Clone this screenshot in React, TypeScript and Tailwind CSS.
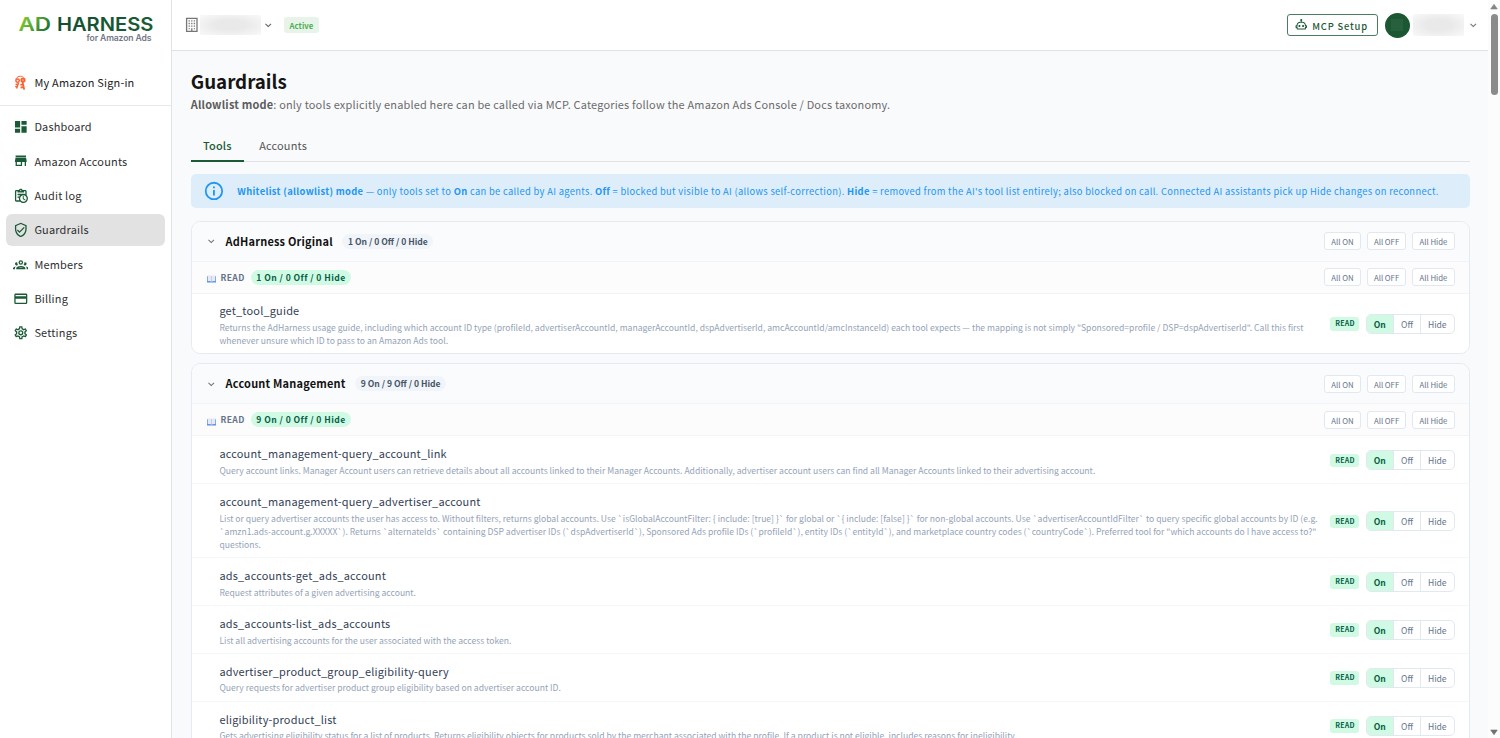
import type { ReactNode } from "react";

const ICONS = {
  dashboard: "M13,3V9H21V3M13,21H21V11H13M3,21H11V15H3M3,13H11V3H3V13Z",
  store: "M12,18H6V14H12M21,14V12L20,7H4L3,12V14H4V20H14V14H18V20H20V14M20,4H4V6H20V4Z",
  audit: "M21 11.11V5C21 3.9 20.11 3 19 3H14.82C14.4 1.84 13.3 1 12 1S9.6 1.84 9.18 3H5C3.9 3 3 3.9 3 5V19C3 20.11 3.9 21 5 21H11.11C12.37 22.24 14.09 23 16 23C19.87 23 23 19.87 23 16C23 14.09 22.24 12.37 21 11.11M12 3C12.55 3 13 3.45 13 4S12.55 5 12 5 11 4.55 11 4 11.45 3 12 3M5 19V5H7V7H17V5H19V9.68C18.09 9.25 17.08 9 16 9H7V11H11.1C10.5 11.57 10.04 12.25 9.68 13H7V15H9.08C9.03 15.33 9 15.66 9 16C9 17.08 9.25 18.09 9.68 19H5M16 21C13.24 21 11 18.76 11 16S13.24 11 16 11 21 13.24 21 16 18.76 21 16 21M16.5 16.25L19.36 17.94L18.61 19.16L15 17V12H16.5V16.25Z",
  shield: "M21,11C21,16.55 17.16,21.74 12,23C6.84,21.74 3,16.55 3,11V5L12,1L21,5V11M12,21C15.75,20 19,15.54 19,11.22V6.3L12,3.18L5,6.3V11.22C5,15.54 8.25,20 12,21M10,17L6,13L7.41,11.59L10,14.17L16.59,7.58L18,9",
  members: "M12,5A3.5,3.5 0 0,0 8.5,8.5A3.5,3.5 0 0,0 12,12A3.5,3.5 0 0,0 15.5,8.5A3.5,3.5 0 0,0 12,5M12,7A1.5,1.5 0 0,1 13.5,8.5A1.5,1.5 0 0,1 12,10A1.5,1.5 0 0,1 10.5,8.5A1.5,1.5 0 0,1 12,7M5.5,8A2.5,2.5 0 0,0 3,10.5C3,11.44 3.53,12.25 4.29,12.68C4.65,12.88 5.06,13 5.5,13C5.94,13 6.35,12.88 6.71,12.68C7.08,12.47 7.39,12.17 7.62,11.81C6.89,10.86 6.5,9.7 6.5,8.5C6.5,8.41 6.5,8.31 6.5,8.22C6.2,8.08 5.86,8 5.5,8M18.5,8C18.14,8 17.8,8.08 17.5,8.22C17.5,8.31 17.5,8.41 17.5,8.5C17.5,9.7 17.11,10.86 16.38,11.81C16.5,12 16.63,12.15 16.78,12.3C16.94,12.45 17.1,12.58 17.29,12.68C17.65,12.88 18.06,13 18.5,13C18.94,13 19.35,12.88 19.71,12.68C20.47,12.25 21,11.44 21,10.5A2.5,2.5 0 0,0 18.5,8M12,14C9.66,14 5,15.17 5,17.5V19H19V17.5C19,15.17 14.34,14 12,14M4.71,14.55C2.78,14.78 0,15.76 0,17.5V19H3V17.07C3,16.06 3.69,15.22 4.71,14.55M19.29,14.55C20.31,15.22 21,16.06 21,17.07V19H24V17.5C24,15.76 21.22,14.78 19.29,14.55M12,16C13.53,16 15.24,16.5 16.23,17H7.77C8.76,16.5 10.47,16 12,16Z",
  billing: "M20,8H4V6H20M20,18H4V12H20M20,4H4C2.89,4 2,4.89 2,6V18A2,2 0 0,0 4,20H20A2,2 0 0,0 22,18V6C22,4.89 21.1,4 20,4Z",
  cog: "M12,8A4,4 0 0,1 16,12A4,4 0 0,1 12,16A4,4 0 0,1 8,12A4,4 0 0,1 12,8M12,10A2,2 0 0,0 10,12A2,2 0 0,0 12,14A2,2 0 0,0 14,12A2,2 0 0,0 12,10M10,22C9.75,22 9.54,21.82 9.5,21.58L9.13,18.93C8.5,18.68 7.96,18.34 7.44,17.94L4.95,18.95C4.73,19.03 4.46,18.95 4.34,18.73L2.34,15.27C2.21,15.05 2.27,14.78 2.46,14.63L4.57,12.97L4.5,12L4.57,11L2.46,9.37C2.27,9.22 2.21,8.95 2.34,8.73L4.34,5.27C4.46,5.05 4.73,4.96 4.95,5.05L7.44,6.05C7.96,5.66 8.5,5.32 9.13,5.07L9.5,2.42C9.54,2.18 9.75,2 10,2H14C14.25,2 14.46,2.18 14.5,2.42L14.87,5.07C15.5,5.32 16.04,5.66 16.56,6.05L19.05,5.05C19.27,4.96 19.54,5.05 19.66,5.27L21.66,8.73C21.79,8.95 21.73,9.22 21.54,9.37L19.43,11L19.5,12L19.43,13L21.54,14.63C21.73,14.78 21.79,15.05 21.66,15.27L19.66,18.73C19.54,18.95 19.27,19.04 19.05,18.95L16.56,17.95C16.04,18.34 15.5,18.68 14.87,18.93L14.5,21.58C14.46,21.82 14.25,22 14,22H10M11.25,4L10.88,6.61C9.68,6.86 8.62,7.5 7.85,8.39L5.44,7.35L4.69,8.65L6.8,10.2C6.4,11.37 6.4,12.64 6.8,13.8L4.68,15.36L5.43,16.66L7.86,15.62C8.63,16.5 9.68,17.14 10.87,17.38L11.24,20H12.76L13.13,17.39C14.32,17.14 15.37,16.5 16.14,15.62L18.57,16.66L19.32,15.36L17.2,13.81C17.6,12.64 17.6,11.37 17.2,10.2L19.31,8.65L18.56,7.35L16.15,8.39C15.38,7.5 14.32,6.86 13.12,6.62L12.75,4H11.25Z",
  building: "M19 3V21H13V17.5H11V21H5V3H19M15 7H17V5H15V7M11 7H13V5H11V7M7 7H9V5H7V7M15 11H17V9H15V11M11 11H13V9H11V11M7 11H9V9H7V11M15 15H17V13H15V15M11 15H13V13H11V15M7 15H9V13H7V15M7 19H9V17.5H7V19M15 19H17V17.5H15V19M21 1H3V23H21V1Z",
  robot: "M17.5 15.5C17.5 16.61 16.61 17.5 15.5 17.5S13.5 16.61 13.5 15.5 14.4 13.5 15.5 13.5 17.5 14.4 17.5 15.5M8.5 13.5C7.4 13.5 6.5 14.4 6.5 15.5S7.4 17.5 8.5 17.5 10.5 16.61 10.5 15.5 9.61 13.5 8.5 13.5M23 15V18C23 18.55 22.55 19 22 19H21V20C21 21.11 20.11 22 19 22H5C3.9 22 3 21.11 3 20V19H2C1.45 19 1 18.55 1 18V15C1 14.45 1.45 14 2 14H3C3 10.13 6.13 7 10 7H11V5.73C10.4 5.39 10 4.74 10 4C10 2.9 10.9 2 12 2S14 2.9 14 4C14 4.74 13.6 5.39 13 5.73V7H14C17.87 7 21 10.13 21 14H22C22.55 14 23 14.45 23 15M21 16H19V14C19 11.24 16.76 9 14 9H10C7.24 9 5 11.24 5 14V16H3V17H5V20H19V17H21V16Z",
  info: "M11,9H13V7H11M12,20C7.59,20 4,16.41 4,12C4,7.59 7.59,4 12,4C16.41,4 20,7.59 20,12C20,16.41 16.41,20 12,20M12,2A10,10 0 0,0 2,12A10,10 0 0,0 12,22A10,10 0 0,0 22,12A10,10 0 0,0 12,2M11,17H13V11H11V17Z",
  chevron: "M7.41,8.58L12,13.17L16.59,8.58L18,10L12,16L6,10L7.41,8.58Z",
};

type IconName = keyof typeof ICONS;

type Tool = { name: string; description: string };
type Category = { title: string; summary: string; readSummary: string; tools: Tool[] };

const NAV: { label: string; icon: IconName }[] = [
  { label: "Dashboard", icon: "dashboard" },
  { label: "Amazon Accounts", icon: "store" },
  { label: "Audit log", icon: "audit" },
  { label: "Guardrails", icon: "shield" },
  { label: "Members", icon: "members" },
  { label: "Billing", icon: "billing" },
  { label: "Settings", icon: "cog" },
];

const CATEGORIES: Category[] = [
  {
    title: "AdHarness Original",
    summary: "1 On / 0 Off / 0 Hide",
    readSummary: "1 On / 0 Off / 0 Hide",
    tools: [
      {
        name: "get_tool_guide",
        description:
          'Returns the AdHarness usage guide, including which account ID type (profileId, advertiserAccountId, managerAccountId, dspAdvertiserId, amcAccountId/amcInstanceId) each tool expects — the mapping is not simply "Sponsored=profile / DSP=dspAdvertiserId". Call this first whenever unsure which ID to pass to an Amazon Ads tool.',
      },
    ],
  },
  {
    title: "Account Management",
    summary: "9 On / 9 Off / 0 Hide",
    readSummary: "9 On / 0 Off / 0 Hide",
    tools: [
      {
        name: "account_management-query_account_link",
        description:
          "Query account links. Manager Account users can retrieve details about all accounts linked to their Manager Accounts. Additionally, advertiser account users can find all Manager Accounts linked to their advertising account.",
      },
      {
        name: "account_management-query_advertiser_account",
        description:
          'List or query advertiser accounts the user has access to. Without filters, returns global accounts. Use `isGlobalAccountFilter: { include: [true] }` for global or `{ include: [false] }` for non-global accounts. Use `advertiserAccountIdFilter` to query specific global accounts by ID (e.g. `amzn1.ads-account.g.XXXXX`). Returns `alternateIds` containing DSP advertiser IDs (`dspAdvertiserId`), Sponsored Ads profile IDs (`profileId`), entity IDs (`entityId`), and marketplace country codes (`countryCode`). Preferred tool for "which accounts do I have access to?" questions.',
      },
      { name: "ads_accounts-get_ads_account", description: "Request attributes of a given advertising account." },
      {
        name: "ads_accounts-list_ads_accounts",
        description: "List all advertising accounts for the user associated with the access token.",
      },
      {
        name: "advertiser_product_group_eligibility-query",
        description: "Query requests for advertiser product group eligibility based on advertiser account ID.",
      },
      {
        name: "eligibility-product_list",
        description:
          "Gets advertising eligibility status for a list of products. Returns eligibility objects for products sold by the merchant associated with the profile. If a product is not eligible, includes reasons for ineligibility.",
      },
    ],
  },
];

function Icon({ name, className }: { name: IconName; className?: string }) {
  return (
    <svg viewBox="0 0 24 24" fill="currentColor" className={`shrink-0 ${className ?? ""}`}>
      <path d={ICONS[name]} />
    </svg>
  );
}

function Logo() {
  return (
    <svg width="142" height="34" viewBox="0 0 142 34" className="block">
      <defs>
        <linearGradient id="ad" x1="0" y1="0" x2="1" y2="0.5">
          <stop offset="0" stopColor="#93d62a" />
          <stop offset="0.5" stopColor="#5fb030" />
          <stop offset="1" stopColor="#1f7433" />
        </linearGradient>
        <linearGradient id="harness" x1="0" y1="0" x2="1" y2="0">
          <stop offset="0" stopColor="#124f30" />
          <stop offset="1" stopColor="#1a5c36" />
        </linearGradient>
      </defs>
      <g fontFamily="Inter, sans-serif" fontWeight="600" fontSize="18.4">
        <text x="2.5" y="22" textLength="32.6" lengthAdjust="spacingAndGlyphs" fill="url(#ad)">AD</text>
        <text x="40.9" y="22" textLength="96.5" lengthAdjust="spacingAndGlyphs" fill="url(#harness)">HARNESS</text>
      </g>
      <text x="70.5" y="32" textLength="65" fontFamily="Inter, sans-serif" fontWeight="600" fontSize="8.6" fill="#717886">
        for Amazon Ads
      </text>
    </svg>
  );
}

function KeysIcon() {
  return (
    <svg width="13" height="16" viewBox="0 0 13 16" className="shrink-0" fill="none" stroke="#fa6432">
      <path d="M2 4.2C2.6 1.4 7 .2 9.6 2.4" strokeWidth="1" />
      <circle cx="3.6" cy="5.6" r="1.7" strokeWidth="1.5" />
      <circle cx="9" cy="5" r="1.6" strokeWidth="2" />
      <path d="M4.6 7.4 2.6 13.4M3.9 9.6 1.6 9.2M3.3 11.8 1.2 11.4" strokeWidth="1.5" />
      <path d="M8.6 7 10.2 14.6M9 9.4 6.4 9.8M9.6 12 6.6 12.6" strokeWidth="1.8" />
    </svg>
  );
}

function BookIcon() {
  return (
    <svg width="9" height="8" viewBox="0 0 9 8" className="mt-1 shrink-0">
      <path d="M0 1.2H9V7.6H0Z" fill="#5b8fe0" />
      <path d="M.7 .6Q2.8 0 4.5 .9Q6.2 0 8.3 .6V6.2Q6.2 5.8 4.5 6.6Q2.8 5.8 .7 6.2Z" fill="#e6e9f6" />
      <path d="M4.5 .9V6.6" stroke="#b4bfdf" strokeWidth=".7" />
    </svg>
  );
}

function BulkActions() {
  return (
    <div className="ml-auto flex gap-[6.1px]">
      {["All ON", "All OFF", "All Hide"].map((label) => (
        <button key={label} className="h-[18.5px] rounded-[3px] border border-[#e2e8f0] bg-white px-[6.1px] pt-px text-[7.8125px] leading-4 text-[#64748b]">
          {label}
        </button>
      ))}
    </div>
  );
}

function ToolRow({ tool, last }: { tool: Tool; last: boolean }) {
  return (
    <div className={`flex items-center bg-white pb-[6.8px] pl-[27.7px] pr-[14px] pt-[8.8px] ${last ? "" : "border-b border-[#f4f7fa]"}`}>
      <div className="w-[1101px] shrink-0">
        <div className="text-[10.94px] leading-[17px] tracking-[0.195px] text-[#334155]">{tool.name}</div>
        <div className="mt-[1.5px] text-[8.598px] leading-[12.89px] text-[#94a3b8]">{tool.description}</div>
      </div>
      <div className="-mt-px ml-auto flex items-center gap-[6.2px]">
        <span className="h-[13.5px] rounded-[3px] bg-[#d1fae5] px-[4.7px] text-[7.03px] font-bold leading-[13.5px] tracking-[0.22px] text-[#065f46]">READ</span>
        <div className="flex h-5 overflow-hidden rounded-[5px] border border-[#e2e8f0] text-[8.594px] leading-[19px] text-[#64748b]">
          <button className="w-[26.5px] bg-[#d1fae5] font-bold text-[#065f46]">On</button>
          <button className="w-[27px] border-l border-[#e2e8f0]">Off</button>
          <button className="w-[33.5px] border-l border-[#e2e8f0]">Hide</button>
        </div>
      </div>
    </div>
  );
}

function CategoryCard({ category }: { category: Category }) {
  return (
    <section className="shrink-0 overflow-hidden rounded-[9.4px] border border-[#e5eaf1] bg-white">
      <div className="flex h-10 items-center border-b border-[#f1f5f9] bg-[#fafbfd] pl-[13.4px] pr-[14px]">
        <Icon name="chevron" className="size-[12.5px] text-[#757575]" />
        <h2 className="ml-2 -mt-px text-[10.94px] font-bold leading-4 tracking-[0.21px] text-[#111]">{category.title}</h2>
        <span className="ml-[9.5px] h-[15px] rounded-full bg-[#f1f5f9] px-[5.5px] text-[8.594px] font-bold leading-[14.5px] text-[#475569]">
          {category.summary}
        </span>
        <BulkActions />
      </div>
      <div className="flex h-8 items-center border-b border-[#f1f5f9] bg-[#fcfcfd] pl-[15.2px] pr-[14px] text-[8.594px] font-bold tracking-[0.43px]">
        <BookIcon />
        <span className="ml-[4.5px] leading-[15px] text-[#64748b]">READ</span>
        <span className="ml-[6px] h-[15px] rounded-full bg-[#d1fae5] px-[5.5px] leading-[14.5px] text-[#065f46]">{category.readSummary}</span>
        <div className="ml-auto font-normal tracking-normal">
          <BulkActions />
        </div>
      </div>
      {category.tools.map((tool, i) => (
        <ToolRow key={tool.name} tool={tool} last={i === category.tools.length - 1} />
      ))}
    </section>
  );
}

function Sidebar() {
  return (
    <aside className="flex w-[172px] shrink-0 flex-col border-r border-[#e2e3e5] bg-white">
      <div className="h-[61px] pl-4 pt-[9px]">
        <Logo />
      </div>
      <div className="flex h-[44.5px] items-center border-b border-[#e8e8e8] pl-[14px]">
        <KeysIcon />
        <span className="ml-[7.5px] -mt-px text-[10.94px] tracking-[0.195px] text-[#212121]">My Amazon Sign-in</span>
      </div>
      <nav className="flex flex-col gap-[3.1px] px-[6.3px] pt-[5.8px]">
        {NAV.map((item) => (
          <a
            key={item.label}
            className={`flex h-[31.25px] items-center rounded-[6px] pl-[6.3px] ${item.label === "Guardrails" ? "bg-[#e2e2e2]" : ""}`}
          >
            <Icon name={item.icon} className="size-[15.6px] text-[#1b5a37]" />
            <span className="ml-[6.2px] -mt-px text-[10.94px] tracking-[0.195px] text-[#2f2f2f]">{item.label}</span>
          </a>
        ))}
      </nav>
    </aside>
  );
}

// Masked account / user name
function Redacted({ className }: { className: string }) {
  return <div className={`bg-[radial-gradient(ellipse_at_center,#e9e9e9_35%,#f9f9f9_100%)] ${className}`} />;
}

function Header() {
  return (
    <header className="flex h-[51px] shrink-0 items-center border-b border-[#e0e1e3] bg-white pl-[11.5px] pr-[9px]">
      <Icon name="building" className="size-[15.6px] text-[#757575]" />
      <Redacted className="ml-px h-5 w-[61px]" />
      <Icon name="chevron" className="ml-[0.5px] size-[12.5px] text-[#616161]" />
      <span className="ml-[9.5px] h-4 rounded-[3px] bg-[#e8f4ea] px-[6px] pt-px text-[7.8125px] font-bold leading-4 text-[#4caf50]">Active</span>
      <button className="ml-auto flex h-[22px] items-center rounded-[3px] border border-[#4a7c60] pl-[6.3px] pr-[9px] text-[#1b5a37]">
        <Icon name="robot" className="-mt-[2px] size-[12.5px]" />
        <span className="ml-[5.2px] mt-px text-[9.375px] font-medium leading-5 tracking-[0.837px]">MCP Setup</span>
      </button>
      <div className="ml-[6.5px] flex size-[25px] items-center justify-center rounded-full bg-[#1b5733]">
        <div className="size-3 bg-[#26603c]" />
      </div>
      <Redacted className="ml-[3.5px] h-[22px] w-[51px]" />
      <Icon name="chevron" className="ml-[2.5px] size-[12.5px] text-[#757575]" />
    </header>
  );
}

function Tab({ active, children }: { active?: boolean; children: ReactNode }) {
  return (
    <button
      className={`h-[37.5px] border-b-2 px-[12.3px] pt-[6.8px] text-[10.94px] leading-4 tracking-[0.195px] ${
        active ? "border-[#1b5a37] font-medium text-[#1b5a37]" : "border-transparent text-[#555]"
      }`}
    >
      {children}
    </button>
  );
}

function Scrollbar() {
  return (
    <div className="flex w-3 shrink-0 flex-col items-center bg-[#fcfcfc]">
      <svg width="8" height="6" viewBox="0 0 8 6" className="mt-1 shrink-0">
        <path d="M4 .3 7.3 5H.7Z" fill="#858585" stroke="#858585" strokeWidth=".6" strokeLinejoin="round" />
      </svg>
      <div className="mt-1 h-[81px] w-[7px] rounded-full bg-[#8b8b8b]" />
      <svg width="8" height="6" viewBox="0 0 8 6" className="mb-[3px] mt-auto shrink-0">
        <path d="M4 5.7 7.3 1H.7Z" fill="#707070" stroke="#707070" strokeWidth=".6" strokeLinejoin="round" />
      </svg>
    </div>
  );
}

export default function App() {
  return (
    <div className="flex h-[738px] w-[1500px] overflow-hidden bg-[#f9fafc] font-['Noto_Sans_CJK_JP','Noto_Sans',sans-serif]">
      <Sidebar />
      <div className="flex min-w-0 flex-1 flex-col">
        <Header />
        <main className="flex min-h-0 flex-1 flex-col overflow-hidden pl-[18.7px] pr-[18.5px] pt-[18px]">
          <h1 className="text-[18.75px] font-bold leading-6 text-[#151515]">Guardrails</h1>
          <p className="mt-[2.5px] text-[10.94px] leading-4 tracking-[0.19px] text-[#6b6b6b]">
            <b className="text-[#5c5c5c]">Allowlist mode</b>: only tools explicitly enabled here can be called via MCP. Categories follow the Amazon Ads Console / Docs taxonomy.
          </p>
          <div className="mt-[12.5px] shrink-0 border-b border-[#e0e2e4]">
            <div className="-mb-px flex gap-[2.8px]">
              <Tab active>Tools</Tab>
              <Tab>Accounts</Tab>
            </div>
          </div>
          <div className="mt-[12.5px] flex h-[34px] shrink-0 items-center rounded-[5px] bg-[#deedfa] pl-[12.2px] text-[#2196f3]">
            <Icon name="info" className="size-[21.9px]" />
            <p className="ml-[12.5px] whitespace-nowrap text-[9.375px] leading-4 tracking-[0.316px]">
              <b>Whitelist (allowlist) mode</b> — only tools set to <b>On</b> can be called by AI agents. <b>Off</b> = blocked but visible to AI (allows self-correction).{" "}
              <b>Hide</b> = removed from the AI's tool list entirely; also blocked on call. Connected AI assistants pick up Hide changes on reconnect.
            </p>
          </div>
          <div className="mt-[12.5px] flex flex-col gap-[9.1px]">
            {CATEGORIES.map((category) => (
              <CategoryCard key={category.title} category={category} />
            ))}
          </div>
        </main>
      </div>
      <Scrollbar />
    </div>
  );
}
